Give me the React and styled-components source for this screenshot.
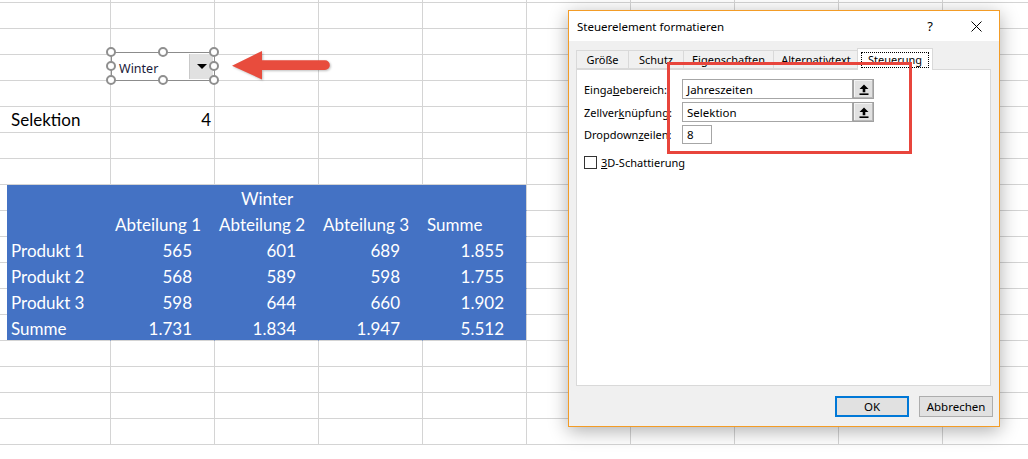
import React from 'react';
import styled, { createGlobalStyle } from 'styled-components';

const BLUE = '#4472c4';
const GRID = '#d4d4d4';
const UI_FONT = '"Segoe UI", "Noto Sans", "Open Sans", sans-serif';

const Global = createGlobalStyle`
  html, body { margin: 0; padding: 0; background: #fff; overflow: hidden; }
  #root { width: 1028px; height: 459px; }
`;

const Page = styled.div`
  position: relative;
  width: 1028px;
  height: 459px;
  overflow: hidden;
  background: #fff;
`;

const Sheet = styled.div`
  display: grid;
  grid-template-columns: 7px repeat(10, 104px);
  grid-template-rows: 3px repeat(17, 26px);
  font-family: Lato, "Open Sans", sans-serif;
  font-size: 17px;
`;

const Cell = styled.div`
  box-sizing: border-box;
  grid-column: span ${(p) => p.$span || 1};
  background: ${(p) => (p.$fill ? BLUE : '#fff')};
  border-right: 1px solid ${(p) => (p.$fill && !p.$edgeR ? BLUE : GRID)};
  border-bottom: 1px solid ${(p) => (p.$fill && !p.$edgeB ? BLUE : GRID)};
  color: ${(p) => (p.$fill ? '#fff' : '#000')};
  display: flex;
  align-items: flex-end;
  justify-content: ${(p) =>
    p.$align === 'right' ? 'flex-end' : p.$align === 'center' ? 'center' : 'flex-start'};
  padding: 0 ${(p) => (p.$padR ?? 3)}px ${(p) => (p.$fill ? 1 : 2)}px 4px;
  line-height: 20px;
  white-space: nowrap;
  overflow: hidden;
`;

/* ---------- combo box control on the sheet ---------- */
const ComboWrap = styled.div`
  position: absolute;
  left: 111px;
  top: 52px;
  width: 104px;
  height: 29px;
`;

const ComboBox = styled.div`
  box-sizing: border-box;
  width: 100%;
  height: 100%;
  border: 1px solid #8c8c8c;
  background: #fff;
  display: flex;
  align-items: center;
  font-family: ${UI_FONT};
  font-size: 12.5px;
  color: #1b1b3a;
  padding: 3px 0 0 7px;
`;

const DropBtn = styled.div`
  margin: -3px 1px 0 auto;
  width: 23px;
  height: 25px;
  background: #e1e1e1;
  border-left: 1px solid #c9c9c9;
  display: flex;
  align-items: center;
  justify-content: center;
`;

const Handle = styled.span`
  position: absolute;
  box-sizing: border-box;
  width: 10px;
  height: 10px;
  border-radius: 50%;
  border: 2px solid #8f8f8f;
  background: #fff;
  left: ${(p) => p.$x}px;
  top: ${(p) => p.$y}px;
  transform: translate(-50%, -50%);
`;

const ArrowSvg = styled.svg`
  position: absolute;
  left: 226px;
  top: 46px;
  overflow: visible;
  filter: drop-shadow(1px 1px 1px rgba(0, 0, 0, 0.25));
`;

/* ---------- dialog ---------- */
const Dialog = styled.div`
  position: absolute;
  left: 568px;
  top: 10px;
  width: 432px;
  height: 417px;
  box-sizing: border-box;
  border: 1px solid #f39c26;
  background: #f0f0f0;
  box-shadow: 0 4px 18px rgba(0, 0, 0, 0.32);
  display: flex;
  flex-direction: column;
  font-family: ${UI_FONT};
  font-size: 11px;
  color: #000;
`;

const TitleBar = styled.div`
  height: 30px;
  background: #fff;
  display: flex;
  align-items: center;
  padding-left: 8px;
  font-size: 11.5px;
`;

const TitleText = styled.span`
  flex: 1;
`;

const TitleIcon = styled.span`
  width: 46px;
  display: flex;
  justify-content: center;
  font-size: 13px;
`;

const Body = styled.div`
  flex: 1;
  display: flex;
  flex-direction: column;
  padding: 7px 8px 0 7px;
`;

const TabsRow = styled.div`
  display: flex;
  align-items: flex-end;
  height: 21px;
  position: relative;
  z-index: 1;
`;

const Tab = styled.div`
  box-sizing: border-box;
  width: ${(p) => p.$w}px;
  height: ${(p) => (p.$active ? 22 : 19)}px;
  margin: ${(p) => (p.$active ? '0 0 -1px -1px' : '0 -1px 0 0')};
  border: 1px solid #d9d9d9;
  border-bottom: ${(p) => (p.$active ? 'none' : '1px solid #d9d9d9')};
  background: ${(p) => (p.$active ? '#fff' : '#f0f0f0')};
  display: flex;
  align-items: center;
  justify-content: center;
  white-space: nowrap;
`;

const FocusLabel = styled.span`
  border: 1px dotted #000;
  padding: 0 6px;
  line-height: 14px;
`;

const Panel = styled.div`
  flex: 1;
  background: #fff;
  border: 1px solid #d9d9d9;
  padding: 9px 7px;
  display: flex;
  flex-direction: column;
  gap: 3px;
`;

const FieldRow = styled.div`
  display: grid;
  grid-template-columns: 98px auto;
  align-items: center;
  height: ${(p) => p.$h || 20}px;
`;

const FieldGroup = styled.div`
  display: flex;
  height: 100%;
`;

const Input = styled.div`
  box-sizing: border-box;
  width: ${(p) => p.$w}px;
  height: 100%;
  border: 1px solid #a6a6a6;
  background: #fff;
  display: flex;
  align-items: center;
  padding-left: 4px;
  font-size: 11.5px;
`;

const RefBtn = styled.div`
  box-sizing: border-box;
  width: 21px;
  height: 100%;
  background: #e1e1e1;
  border: 1px solid #a0a0a0;
  box-shadow: inset -1px -1px 0 #b8b8b8, inset 1px 1px 0 #f4f4f4;
  display: flex;
  align-items: center;
  justify-content: center;
`;

const CheckRow = styled.label`
  display: flex;
  align-items: center;
  gap: 4px;
  margin-top: 8px;
`;

const CheckBox = styled.span`
  box-sizing: border-box;
  width: 13px;
  height: 13px;
  border: 1px solid #333;
  background: #fff;
`;

const Footer = styled.div`
  display: flex;
  justify-content: flex-end;
  gap: 10px;
  padding: 10px 6px 9px;
`;

const Btn = styled.div`
  box-sizing: border-box;
  width: 74px;
  height: 21px;
  background: #e1e1e1;
  border: ${(p) => (p.$default ? '2px solid #0078d7' : '1px solid #adadad')};
  display: flex;
  align-items: center;
  justify-content: center;
  font-size: 11.5px;
`;

const Highlight = styled.div`
  position: absolute;
  left: 98px;
  top: 51px;
  width: 245px;
  height: 92px;
  box-sizing: border-box;
  border: 3px solid #e8453c;
  pointer-events: none;
  z-index: 2;
`;

/* ---------- data ---------- */
const cells = {};
const put = (r, c, text, opts = {}) => {
  cells[`${r}-${c}`] = { text, ...opts };
};
put(5, 1, 'Selektion');
put(5, 2, '4', { align: 'right' });

const tableRows = [
  ['Produkt 1', '565', '601', '689', '1.855'],
  ['Produkt 2', '568', '589', '598', '1.755'],
  ['Produkt 3', '598', '644', '660', '1.902'],
  ['Summe', '1.731', '1.834', '1.947', '5.512'],
];

const TOP = 8;
const BOTTOM = 13;
for (let r = TOP; r <= BOTTOM; r++) {
  for (let c = 1; c <= 5; c++) {
    put(r, c, '', { fill: true, edgeR: c === 5, edgeB: r === BOTTOM });
  }
}
put(TOP, 1, 'Winter', { fill: true, span: 5, align: 'center', edgeR: true });
['', 'Abteilung 1', 'Abteilung 2', 'Abteilung 3', 'Summe'].forEach((t, i) =>
  put(TOP + 1, i + 1, t, { fill: true, edgeR: i === 4 })
);
tableRows.forEach((row, ri) =>
  row.forEach((t, i) =>
    put(TOP + 2 + ri, i + 1, t, {
      fill: true,
      align: i === 0 ? 'left' : 'right',
      padR: i === 0 ? 3 : 22,
      edgeR: i === 4,
      edgeB: TOP + 2 + ri === BOTTOM,
    })
  )
);

function SheetGrid() {
  const out = [];
  for (let r = 0; r < 18; r++) {
    for (let c = 0; c < 11; c++) {
      if (r === TOP && c >= 2 && c <= 5) continue;
      const d = cells[`${r}-${c}`] || {};
      out.push(
        <Cell
          key={`${r}-${c}`}
          $fill={d.fill}
          $span={d.span}
          $align={d.align}
          $padR={d.padR}
          $edgeR={d.edgeR}
          $edgeB={d.edgeB}
        >
          {d.text}
        </Cell>
      );
    }
  }
  return <Sheet>{out}</Sheet>;
}

const UpIcon = () => (
  <svg width="10" height="11" viewBox="0 0 10 11">
    <path d="M5 0.5 L9.5 5 H6.3 V8.2 H3.7 V5 H0.5 Z" fill="#000" />
    <rect x="0.5" y="9.4" width="9" height="1.6" fill="#000" />
  </svg>
);

const CloseIcon = () => (
  <svg width="11" height="11" viewBox="0 0 11 11">
    <path d="M0.5 0.5 L10.5 10.5 M10.5 0.5 L0.5 10.5" stroke="#000" strokeWidth="1" />
  </svg>
);

const tabs = [
  { label: 'Größe', w: 53 },
  { label: 'Schutz', w: 56 },
  { label: 'Eigenschaften', w: 91 },
  { label: 'Alternativtext', w: 86 },
];

export default function App() {
  return (
    <Page>
      <Global />
      <SheetGrid />

      <ComboWrap>
        <ComboBox>
          Winter
          <DropBtn>
            <svg width="10" height="5" viewBox="0 0 10 5">
              <path d="M0 0 H10 L5 5 Z" fill="#000" />
            </svg>
          </DropBtn>
        </ComboBox>
        <Handle $x={0} $y={0} />
        <Handle $x={52} $y={0} />
        <Handle $x={103} $y={0} />
        <Handle $x={0} $y={14} />
        <Handle $x={103} $y={14} />
        <Handle $x={0} $y={28} />
        <Handle $x={52} $y={28} />
        <Handle $x={103} $y={28} />
      </ComboWrap>

      <ArrowSvg width="110" height="38" viewBox="0 0 110 38">
        <path
          d="M6 19.7 L36 5 L36 14.3 L99 14.3 A4.85 4.85 0 0 1 99 24 L36 24 L36 33.5 Z"
          fill="#e84c3d"
        />
      </ArrowSvg>

      <Dialog>
        <TitleBar>
          <TitleText>Steuerelement formatieren</TitleText>
          <TitleIcon>?</TitleIcon>
          <TitleIcon>
            <CloseIcon />
          </TitleIcon>
        </TitleBar>
        <Body>
          <TabsRow>
            {tabs.map((t) => (
              <Tab key={t.label} $w={t.w}>
                {t.label}
              </Tab>
            ))}
            <Tab $active $w={76}>
              <FocusLabel>Steuerung</FocusLabel>
            </Tab>
          </TabsRow>
          <Panel>
            <FieldRow>
              <span>
                Einga<u>b</u>ebereich:
              </span>
              <FieldGroup>
                <Input $w={171}>Jahreszeiten</Input>
                <RefBtn>
                  <UpIcon />
                </RefBtn>
              </FieldGroup>
            </FieldRow>
            <FieldRow>
              <span>
                Zellver<u>k</u>nüpfung:
              </span>
              <FieldGroup>
                <Input $w={171}>Selektion</Input>
                <RefBtn>
                  <UpIcon />
                </RefBtn>
              </FieldGroup>
            </FieldRow>
            <FieldRow $h={19}>
              <span>
                Dropdown<u>z</u>eilen:
              </span>
              <FieldGroup>
                <Input $w={30}>8</Input>
              </FieldGroup>
            </FieldRow>
            <CheckRow>
              <CheckBox />
              <span>
                <u>3</u>D-Schattierung
              </span>
            </CheckRow>
          </Panel>
        </Body>
        <Footer>
          <Btn $default>OK</Btn>
          <Btn>Abbrechen</Btn>
        </Footer>
        <Highlight />
      </Dialog>
    </Page>
  );
}
